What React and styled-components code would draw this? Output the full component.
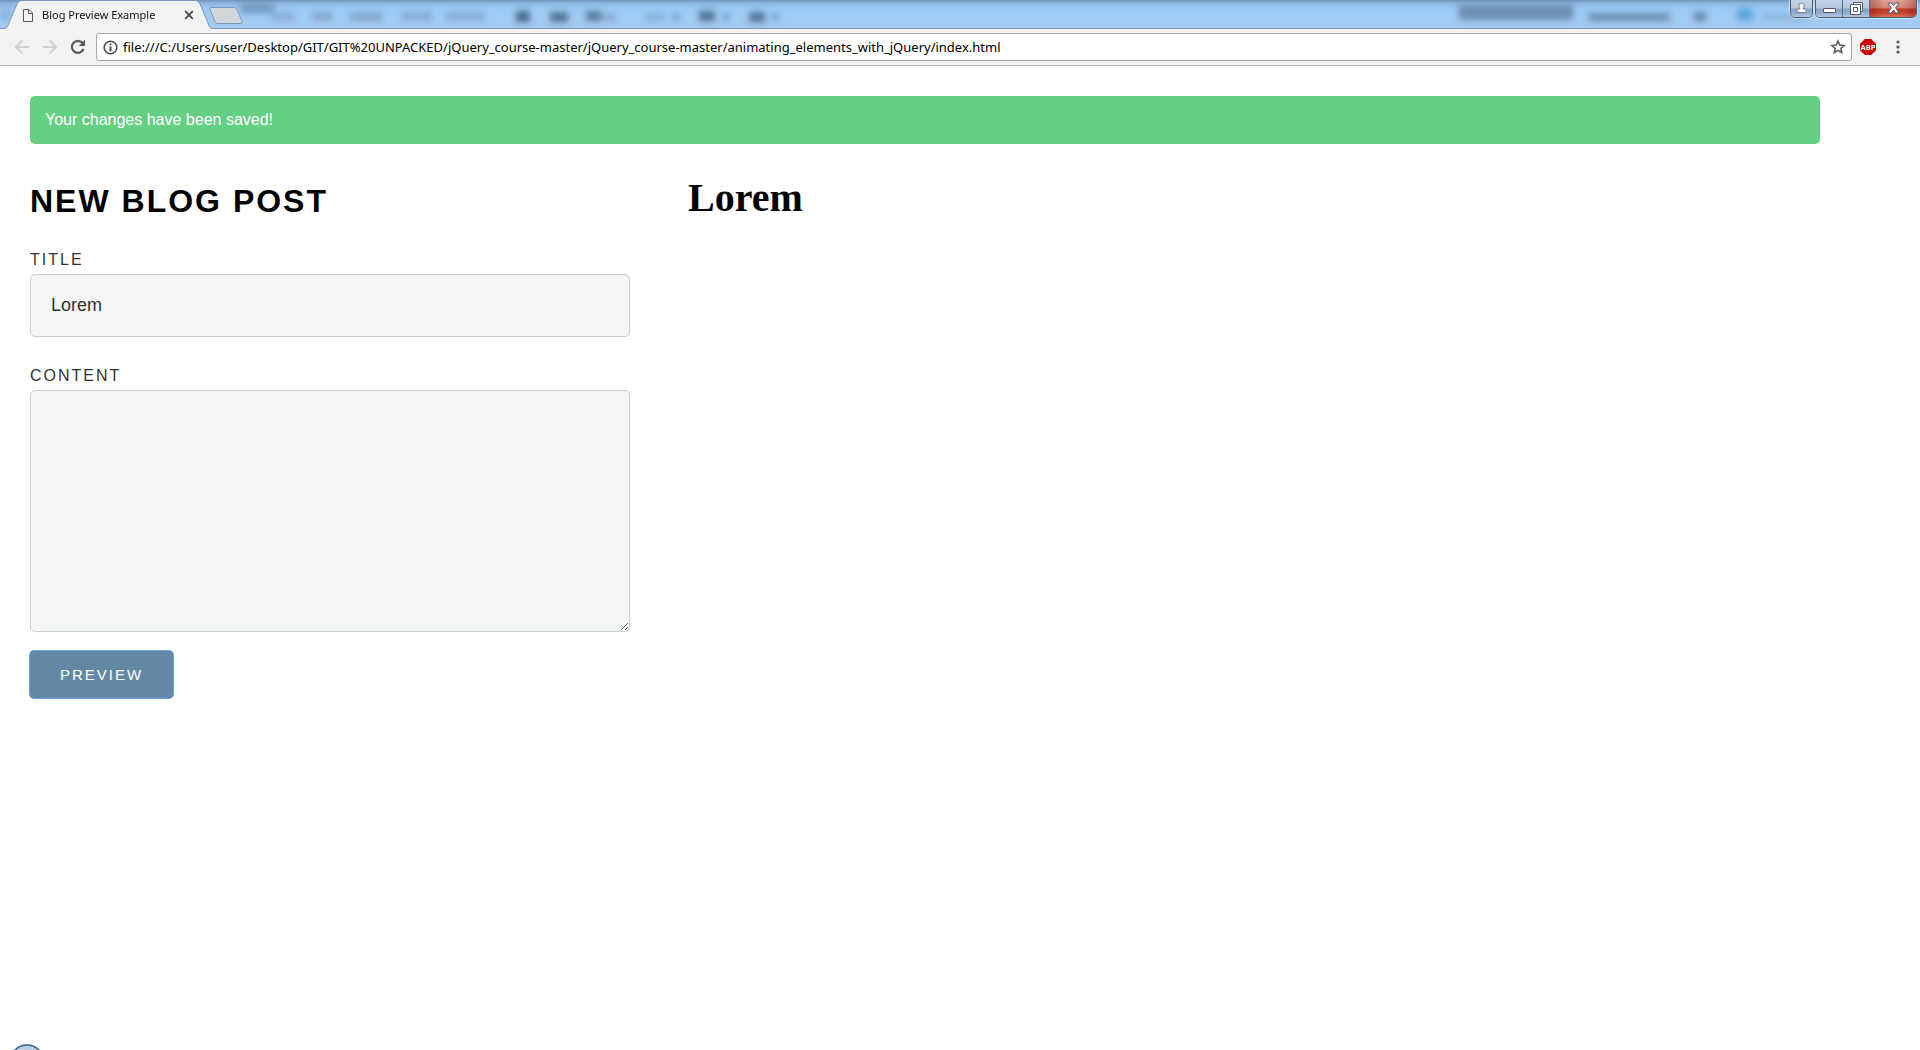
import React from "react";
import styled, { createGlobalStyle } from "styled-components";

const GlobalStyle = createGlobalStyle`
  *, *::before, *::after { box-sizing: border-box; }
  body { margin: 0; background: #fff; }
`;

const uiFont = `"Noto Sans", "Open Sans", sans-serif`;
const pageFont = `"Liberation Sans", Arial, sans-serif`;

const Window = styled.div`
  display: flex;
  flex-direction: column;
  min-height: 100vh;
`;

const TitleBar = styled.header`
  position: relative;
  display: flex;
  height: 29px;
  background: linear-gradient(#6f93b8 0, #8db5dc 3px, #9ccaf5 9px, #a0ccf5 17px, #a6c8ee 28px);
  border-bottom: 1px solid #7f98bd;
`;

const Glass = styled.svg`
  position: absolute;
  top: 0;
  left: 0;
  width: 100%;
  height: 28px;
`;

const Tab = styled.div`
  position: relative;
  display: flex;
  align-items: center;
  width: 208px;
  height: 29px;
  margin: 0 -3px -1px 4px;
  padding: 1px 14px 0 18px;
  font: 11px/16px ${uiFont};
  color: #111;
`;

const TabShape = styled.svg`
  position: absolute;
  top: 0;
  left: 0;
  width: 208px;
  height: 29px;
`;

const TabTitle = styled.span`
  position: relative;
  flex: 1;
  margin-left: 8px;
  white-space: nowrap;
`;

const BareButton = styled.button`
  display: flex;
  align-items: center;
  justify-content: center;
  flex: none;
  width: ${(p) => p.$w || 28}px;
  height: 28px;
  padding: 0;
  border: 0;
  background: none;
  position: relative;
`;

const TabIcon = styled.svg`
  position: relative;
  flex: none;
`;

const Controls = styled.div`
  position: relative;
  display: flex;
  align-items: flex-start;
  gap: 2px;
  margin: 0 3px 0 auto;
`;

const ControlGroup = styled.div`
  display: flex;
  height: 18px;
  border: 1px solid #4a5d74;
  border-top: 0;
  border-radius: 0 0 5px 5px;
  overflow: hidden;
  box-shadow: 0 0 0 1px rgba(225, 238, 250, 0.6);
`;

const ControlButton = styled.button`
  display: flex;
  align-items: center;
  justify-content: center;
  width: ${(p) => p.$w}px;
  height: 17px;
  padding: 0 0 1px;
  border: 0;
  border-left: ${(p) => (p.$divided ? "1px solid #5b6f88" : "0")};
  background: ${(p) =>
    p.$close
      ? "linear-gradient(90deg, rgba(120,20,10,.35), transparent 30%, transparent 70%, rgba(120,20,10,.35)), linear-gradient(#dfa398 0, #d38474 8px, #bf3a22 9px, #c9472c 13px, #d8745a)"
      : "linear-gradient(#c3d3e4 0, #b4c7dc 8px, #8aa4c1 9px, #93add0 13px, #b3cbe6)"};
`;

const Toolbar = styled.nav`
  display: flex;
  align-items: center;
  height: 37px;
  padding: 0 6px 0 8px;
  background: #f2f2f2;
  border-bottom: 1px solid #b4b4b4;
`;

const Omnibox = styled.div`
  display: flex;
  align-items: center;
  flex: 1;
  height: 28px;
  margin: 0 2px 0 4px;
  padding: 0 3px 0 6px;
  background: #fff;
  border: 1px solid #a6a6a6;
  border-radius: 3px;
`;

const Address = styled.input`
  flex: 1;
  min-width: 0;
  height: 24px;
  margin-left: 5px;
  padding: 0;
  border: 0;
  outline: 0;
  background: none;
  color: #000;
  font: 13px/24px ${uiFont};
`;

const Page = styled.main`
  display: flex;
  flex-direction: column;
  gap: 30px;
  padding: 30px 100px 30px 30px;
  font-family: ${pageFont};
`;

const Alert = styled.div`
  padding: 15px;
  border-radius: 5px;
  background: #65cf84;
  color: #fff;
  font-size: 16px;
  line-height: 18px;
`;

const Columns = styled.div`
  display: grid;
  grid-template-columns: 600px 1fr;
  column-gap: 58px;
`;

const Form = styled.form`
  display: flex;
  flex-direction: column;
  align-items: flex-start;
  padding-top: 7px;
`;

const Heading = styled.h1`
  margin: 0 0 29px;
  color: #000;
  font-size: 32px;
  line-height: 40px;
  font-weight: 700;
  letter-spacing: 2px;
  text-transform: uppercase;
`;

const Label = styled.label`
  margin-bottom: 4px;
  color: #333;
  font-size: 16px;
  line-height: 20px;
  letter-spacing: 2px;
  text-transform: uppercase;
`;

const Field = styled.input`
  width: 100%;
  height: ${(p) => p.$h}px;
  margin-bottom: ${(p) => p.$gap}px;
  padding: 20px;
  border: 1px solid #cccfcf;
  border-radius: 5px;
  outline: 0;
  background: #f5f7f7;
  color: #333;
  font: 18px/20px ${pageFont};
  resize: vertical;
`;

const Submit = styled.button`
  height: 47px;
  padding: 0 30px;
  border: 0;
  border-radius: 4px;
  outline: 0;
  box-shadow: 0 0 0 1px #6fa3f0;
  background: #6388a4;
  color: #fff;
  font: 15px/20px ${pageFont};
  letter-spacing: 2px;
  text-transform: uppercase;
`;

const PreviewTitle = styled.h1`
  margin: 0;
  color: #000;
  font: 700 40px/48px "Liberation Serif", "Times New Roman", serif;
`;

const StartOrb = styled.svg`
  position: fixed;
  left: 12px;
  bottom: 0;
`;

const smudges = [
  [0, 8, 12, 12, 0.2], [240, 4, 34, 9, 0.4], [272, 13, 22, 7, 0.28],
  [312, 13, 20, 7, 0.35], [350, 13, 32, 7, 0.35], [402, 13, 30, 7, 0.3],
  [446, 13, 38, 7, 0.3], [516, 11, 14, 11, 0.8], [550, 12, 18, 10, 0.75],
  [586, 11, 16, 10, 0.65], [604, 14, 12, 6, 0.3], [645, 14, 20, 6, 0.25],
  [672, 14, 8, 6, 0.35], [699, 11, 16, 10, 0.75], [722, 14, 8, 6, 0.35],
  [749, 12, 16, 10, 0.7], [771, 14, 8, 6, 0.35], [1459, 5, 114, 15, 0.5],
  [1588, 13, 82, 8, 0.5], [1694, 12, 12, 9, 0.55], [1762, 14, 45, 6, 0.2],
];

function TitleGlass() {
  return (
    <Glass aria-hidden="true">
      <defs>
        <filter id="soft" filterUnits="userSpaceOnUse" x="-20" y="-20" width="4000" height="70">
          <feGaussianBlur stdDeviation="3.4" />
        </filter>
      </defs>
      <g filter="url(#soft)">
        {smudges.map(([x, y, w, h, o]) => (
          <rect key={x} x={x} y={y} width={w} height={h} fill="#35536f" opacity={o} />
        ))}
        <rect x="1736" y="8" width="18" height="13" rx="6" fill="#4b9ed6" opacity=".8" />
      </g>
    </Glass>
  );
}

export default function App() {
  return (
    <>
      <GlobalStyle />
      <Window>
        <TitleBar>
          <TitleGlass />
          <Tab>
            <TabShape viewBox="0 0 208 29" aria-hidden="true">
              <path d="M0 29C3 28 4 26 5 23L13 4Q14 1 17 .5H192Q195 1 196 4L204 23Q205 28 208 29Z" fill="#f2f2f2" />
              <path d="M0 28.5C3 28 4 26 5 23L13 4Q14 1 17 .5H192Q195 1 196 4L204 23Q205 28 208 28.5" fill="none" stroke="#7f98bd" />
            </TabShape>
            <TabIcon width="12" height="15" viewBox="0 0 12 15" fill="none" stroke="#5a5a5a" aria-hidden="true">
              <path d="M1.5 1.5H7L10.5 5V13.5H1.5ZM6.5 1.5V5.5H10.5" />
            </TabIcon>
            <TabTitle>Blog Preview Example</TabTitle>
            <BareButton $w={18} aria-label="Close tab">
              <svg width="10" height="10" viewBox="0 0 10 10" stroke="#4a4a4a" strokeWidth="1.9">
                <path d="M1.2 1.2L8.8 8.8M8.8 1.2L1.2 8.8" />
              </svg>
            </BareButton>
          </Tab>
          <BareButton $w={36} aria-label="New tab">
            <svg width="36" height="28" viewBox="-2 0 36 28">
              <path d="M-.5 7.500H23Q25 7.500 26 9.500L31 21.500Q31.500 23.500 30 23.500H7Q5 23.500 4 21.500L-1 9.500Q-1.500 7.500-.5 7.500Z" fill="#d2d5da" stroke="#7f98bd" />
            </svg>
          </BareButton>
          <Controls>
            <ControlGroup>
              <ControlButton $w={21} aria-label="Profile">
                <svg width="11" height="12" viewBox="0 0 11 12" fill="#fff" stroke="#53647a" strokeWidth=".8">
                  <path d="M.8 10.600V8.800Q1 7 4 6.600Q2.800 5.500 2.800 3.700Q3 1 5.500 1T8.200 3.700Q8.200 5.500 7 6.600Q10 7 10.200 8.800V10.600Z" />
                </svg>
              </ControlButton>
            </ControlGroup>
            <ControlGroup>
              <ControlButton $w={26} aria-label="Minimize">
                <svg width="13" height="14" viewBox="0 0 13 14">
                  <rect x=".5" y="7.500" width="12" height="4" rx=".5" fill="#fff" stroke="#535666" />
                </svg>
              </ControlButton>
              <ControlButton $w={27} $divided aria-label="Restore">
                <svg width="13" height="13" viewBox="0 0 13 13" fill="#fff" stroke="#535666">
                  <path d="M3.500.5H12.500V9.500H3.500Z" />
                  <path fillRule="evenodd" d="M.5 2.500H10.500V12.500H.5ZM3.500 5.500V9.500H7.500V5.500Z" />
                </svg>
              </ControlButton>
              <ControlButton $w={47} $divided $close aria-label="Close">
                <svg width="13" height="12" viewBox="0 0 13 12" fill="#fff" stroke="#535666">
                  <path d="M1 1H4.500L6.500 3.500L8.500 1H12L8.700 5.800L12 11H8.500L6.500 8L4.500 11H1L4.300 5.800Z" />
                </svg>
              </ControlButton>
            </ControlGroup>
          </Controls>
        </TitleBar>

        <Toolbar>
          <BareButton aria-label="Back">
            <svg width="16" height="16" viewBox="0 0 16 16" fill="none" stroke="#d0d0d0" strokeWidth="2">
              <path d="M15 8H2.500M8.500 1.500L2 8L8.500 14.500" />
            </svg>
          </BareButton>
          <BareButton aria-label="Forward">
            <svg width="16" height="16" viewBox="0 0 16 16" fill="none" stroke="#d0d0d0" strokeWidth="2">
              <path d="M1 8H13.500M7.500 1.500L14 8L7.500 14.500" />
            </svg>
          </BareButton>
          <BareButton aria-label="Reload">
            <svg width="16" height="16" viewBox="0 0 16 16">
              <path d="M13.500 10A6 6 0 1 1 12.500 4" fill="none" stroke="#5a5a5a" strokeWidth="2.200" />
              <path d="M15 .8V7H8.800Z" fill="#5a5a5a" />
            </svg>
          </BareButton>
          <Omnibox>
            <svg width="15" height="15" viewBox="0 0 15 15" aria-hidden="true">
              <circle cx="7.500" cy="7.500" r="6.300" fill="none" stroke="#4a4a4a" strokeWidth="1.600" />
              <path d="M7.500 6.500V11.200M7.500 3.600V5.300" stroke="#4a4a4a" strokeWidth="2" />
            </svg>
            <Address
              aria-label="Address"
              defaultValue="file:///C:/Users/user/Desktop/GIT/GIT%20UNPACKED/jQuery_course-master/jQuery_course-master/animating_elements_with_jQuery/index.html"
            />
            <BareButton $w={20} aria-label="Bookmark">
              <svg width="16" height="16" viewBox="0 0 16 16" fill="none" stroke="#5a5a5a" strokeWidth="1.500">
                <path d="M8 2L9.700 6.100L14.200 6.500L10.800 9.400L11.800 13.700L8 11.400L4.200 13.700L5.200 9.400L1.800 6.500L6.300 6.100Z" />
              </svg>
            </BareButton>
          </Omnibox>
          <BareButton aria-label="Adblock Plus">
            <svg width="16" height="16" viewBox="0 0 16 16">
              <path d="M4.800 0H11.200L16 4.800V11.200L11.200 16H4.800L0 11.200V4.800Z" fill="#cc0505" />
              <text x="8" y="10.700" textAnchor="middle" fontFamily="Open Sans, sans-serif" fontWeight="700" fontSize="7.500" fill="#fff">ABP</text>
            </svg>
          </BareButton>
          <BareButton $w={32} aria-label="Menu">
            <svg width="4" height="14" viewBox="0 0 4 14" fill="#5a5a5a">
              <circle cx="2" cy="2" r="1.600" />
              <circle cx="2" cy="7" r="1.600" />
              <circle cx="2" cy="12" r="1.600" />
            </svg>
          </BareButton>
        </Toolbar>

        <Page>
          <Alert role="status">Your changes have been saved!</Alert>
          <Columns>
            <Form onSubmit={(e) => e.preventDefault()}>
              <Heading>New Blog Post</Heading>
              <Label htmlFor="title">Title</Label>
              <Field id="title" type="text" defaultValue="Lorem" $h={63} $gap={29} />
              <Label htmlFor="content">Content</Label>
              <Field as="textarea" id="content" $h={242} $gap={19} />
              <Submit type="submit">Preview</Submit>
            </Form>
            <PreviewTitle>Lorem</PreviewTitle>
          </Columns>
        </Page>
      </Window>
      <StartOrb width="30" height="6" viewBox="0 0 30 6" aria-hidden="true">
        <circle cx="15" cy="18" r="17" fill="#b9cfe2" stroke="#2f6389" strokeWidth="1.400" />
      </StartOrb>
    </>
  );
}
